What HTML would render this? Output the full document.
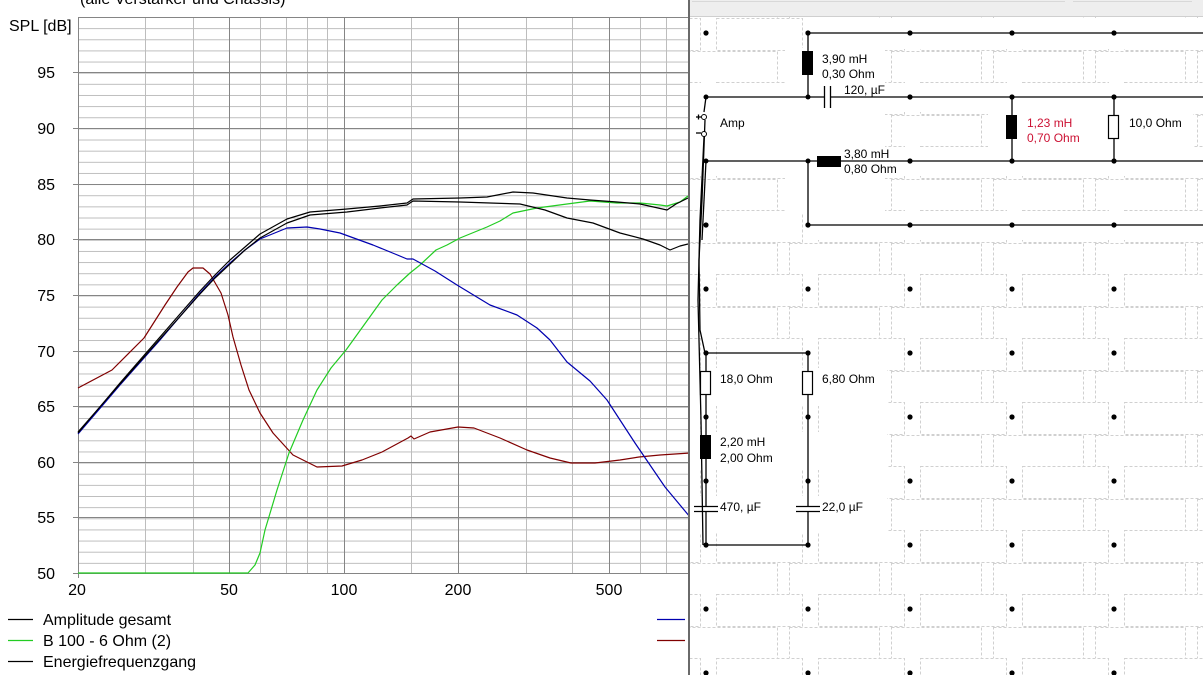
<!DOCTYPE html>
<html><head><meta charset="utf-8"><style>
html,body{margin:0;padding:0;background:#fff;width:1203px;height:675px;overflow:hidden}
svg{display:block}
text{font-family:"Liberation Sans",sans-serif}
</style></head><body>
<svg width="1203" height="675" viewBox="0 0 1203 675" xmlns="http://www.w3.org/2000/svg">
<defs>
<pattern id="hg" patternUnits="userSpaceOnUse" x="0" y="17" width="1203" height="11.14">
<line x1="0" y1="0.5" x2="1203" y2="0.5" stroke="#bdbdbd" stroke-width="1"/>
</pattern>
<pattern id="brick" patternUnits="userSpaceOnUse" x="716" y="18" width="102" height="64">
<g fill="none" stroke="#d0d0d0" stroke-width="1" stroke-dasharray="3,2">
<rect x="0.5" y="0.5" width="86" height="32"/>
<rect x="73.5" y="33.5" width="90" height="31"/>
<rect x="-28.5" y="33.5" width="90" height="31"/>
</g>
<circle cx="92" cy="15" r="2.6" fill="#000"/>
</pattern>
</defs>

<!-- Chart -->
<text x="80" y="4" font-size="16" fill="#000">(alle Verstärker und Chassis)</text>
<text x="9" y="31" font-size="16" fill="#000">SPL [dB]</text>
<rect x="78" y="17" width="612" height="556" fill="url(#hg)"/>
<g stroke="#bdbdbd" stroke-width="1">
<line x1="145.5" y1="17" x2="145.5" y2="573"/><line x1="193.5" y1="17" x2="193.5" y2="573"/>
<line x1="260.5" y1="17" x2="260.5" y2="573"/><line x1="286.5" y1="17" x2="286.5" y2="573"/>
<line x1="307.5" y1="17" x2="307.5" y2="573"/><line x1="327.5" y1="17" x2="327.5" y2="573"/>
<line x1="411.5" y1="17" x2="411.5" y2="573"/><line x1="526.5" y1="17" x2="526.5" y2="573"/>
<line x1="572.5" y1="17" x2="572.5" y2="573"/><line x1="640.5" y1="17" x2="640.5" y2="573"/>
<line x1="666.5" y1="17" x2="666.5" y2="573"/>
</g>
<g stroke="#858585" stroke-width="1">
<line x1="229.5" y1="17" x2="229.5" y2="573"/><line x1="344.5" y1="17" x2="344.5" y2="573"/>
<line x1="458.5" y1="17" x2="458.5" y2="573"/><line x1="609.5" y1="17" x2="609.5" y2="573"/>
<line x1="78" y1="17.5" x2="690" y2="17.5"/>
<line x1="73" y1="72.5" x2="690" y2="72.5"/><line x1="73" y1="128.5" x2="690" y2="128.5"/>
<line x1="73" y1="184.5" x2="690" y2="184.5"/><line x1="73" y1="239.5" x2="690" y2="239.5"/>
<line x1="73" y1="295.5" x2="690" y2="295.5"/><line x1="73" y1="351.5" x2="690" y2="351.5"/>
<line x1="73" y1="406.5" x2="690" y2="406.5"/><line x1="73" y1="462.5" x2="690" y2="462.5"/>
<line x1="73" y1="517.5" x2="690" y2="517.5"/><line x1="73" y1="573.5" x2="690" y2="573.5"/>
<line x1="78.5" y1="17" x2="78.5" y2="578"/>
</g>
<g font-size="16" fill="#000" text-anchor="end">
<text x="55" y="78">95</text><text x="55" y="134">90</text><text x="55" y="190">85</text>
<text x="55" y="245">80</text><text x="55" y="301">75</text><text x="55" y="357">70</text>
<text x="55" y="412">65</text><text x="55" y="468">60</text><text x="55" y="523">55</text>
<text x="55" y="579">50</text>
</g>
<g font-size="16" fill="#000" text-anchor="middle">
<text x="77" y="595">20</text><text x="229" y="595">50</text><text x="344" y="595">100</text>
<text x="458" y="595">200</text><text x="609" y="595">500</text>
</g>

<g fill="none" stroke-width="1.2" stroke-linejoin="round">
<polyline stroke="#800000" points="78,388 112,370 144,338 165,305 177,287 188,272 193,268 203,268 210,274 221,293 228,315 233,337 241,365 249,390 260,413 273,433 293,455 317,467 342,466 362,460 382,452 408,438 411,436 414,439 430,432 458,427 474,428 500,438 527,450 550,458 571,463 595,463 620,460 639,457 660,455 690,453"/>
<polyline stroke="#22cc22" points="78,573 248,573 255,565 260,553 265,530 277,490 289,453 303,420 317,390 331,368 346,350 364,325 382,300 397,285 410,273 420,265 436,250 447,245 460,238 487,227 500,221 513,213 537,208 567,204 590,201 617,203 640,203 660,205 667,206 680,202 688,196"/>
<polyline stroke="#0000b0" points="78,434 120,385 160,340 200,293 215,277 230,263 245,250 260,239 287,228 307,227 320,229 340,233 373,245 395,254 407,259 413,259 435,271 457,285 490,305 517,315 537,328 550,340 567,362 590,381 607,400 620,420 635,443 650,465 665,487 690,517"/>
<polyline stroke="#000" points="78,433 120,383 160,337 200,291 215,275 230,260 245,247 260,234 287,219 310,212 347,209 380,206 407,203 413,199 460,198 487,197 513,192 533,193 567,198 590,200 617,202 640,204 667,210 676,204 688,198"/>
<polyline stroke="#000" points="78,432 120,384 160,339 200,294 215,278 230,264 245,250 260,238 287,223 310,215 347,212 380,208 407,205 413,201 460,202 490,203 520,204 545,210 567,218 593,223 620,233 643,239 660,245 670,250 680,246 688,244"/>
</g>

<!-- Legend -->
<g stroke-width="1.2">
<line x1="8" y1="619.5" x2="33" y2="619.5" stroke="#000"/>
<line x1="8" y1="640.5" x2="33" y2="640.5" stroke="#22cc22"/>
<line x1="8" y1="661.5" x2="33" y2="661.5" stroke="#000"/>
<line x1="657" y1="619.5" x2="685" y2="619.5" stroke="#0000b0"/>
<line x1="657" y1="640.5" x2="685" y2="640.5" stroke="#800000"/>
</g>
<g font-size="16" fill="#000">
<text x="43" y="625">Amplitude gesamt</text>
<text x="43" y="646">B 100 - 6 Ohm (2)</text>
<text x="43" y="667">Energiefrequenzgang</text>
</g>

<!-- Right panel -->
<rect x="688" y="0" width="515" height="675" fill="#fff"/>
<rect x="690" y="17" width="513" height="658" fill="url(#brick)"/>
<g fill="#fff">
<rect x="806" y="18" width="397" height="31"/>
<rect x="690" y="83" width="513" height="29"/>
<rect x="690" y="147" width="513" height="29"/>
<rect x="806" y="211" width="397" height="29"/>
<rect x="785" y="48" width="100" height="36"/>
<rect x="690" y="110" width="195" height="40"/>
<rect x="988" y="110" width="205" height="40"/>
<rect x="785" y="176" width="100" height="37"/>
<rect x="690" y="368" width="197" height="38"/>
<rect x="690" y="432" width="197" height="38"/>
<rect x="690" y="496" width="197" height="37"/>
</g>
<g fill="#000">
<circle cx="910" cy="33" r="2.6"/><circle cx="1012" cy="33" r="2.6"/><circle cx="1114" cy="33" r="2.6"/>
<circle cx="910" cy="97" r="2.6"/><circle cx="1012" cy="97" r="2.6"/><circle cx="1114" cy="97" r="2.6"/>
<circle cx="910" cy="161" r="2.6"/><circle cx="1012" cy="161" r="2.6"/><circle cx="1114" cy="161" r="2.6"/>
<circle cx="910" cy="225" r="2.6"/><circle cx="1012" cy="225" r="2.6"/><circle cx="1114" cy="225" r="2.6"/>
<circle cx="808" cy="33" r="2.6"/><circle cx="808" cy="225" r="2.6"/>
</g>
<rect x="688" y="0" width="515" height="17" fill="#eeeeee"/>
<line x1="688" y1="16.5" x2="1203" y2="16.5" stroke="#cfcfcf"/>
<line x1="692" y1="1.5" x2="1065" y2="1.5" stroke="#d8d8d8"/>
<line x1="1073" y1="1.5" x2="1192" y2="1.5" stroke="#d8d8d8"/>
<rect x="688" y="0" width="2" height="675" fill="#6a6a6a"/>

<g stroke="#000" stroke-width="1.3" fill="none">
<line x1="808" y1="33" x2="1203" y2="33"/>
<line x1="808" y1="33" x2="808" y2="97"/>
<line x1="706" y1="97" x2="824" y2="97"/><line x1="831" y1="97" x2="1203" y2="97"/>
<line x1="824.5" y1="86" x2="824.5" y2="108"/><line x1="830.5" y1="86" x2="830.5" y2="108"/>
<line x1="706" y1="161" x2="1203" y2="161"/>
<line x1="808" y1="161" x2="808" y2="225"/>
<line x1="808" y1="225" x2="1203" y2="225"/>
<line x1="1012" y1="97" x2="1012" y2="161"/>
<line x1="1114" y1="97" x2="1114" y2="161"/>
<line x1="706" y1="97" x2="704" y2="112"/>
<polyline points="705,120 702,200 699,260 700,330 705,353"/>
<polyline points="704,137 700,220 698,300 701,420 703,545"/>
<line x1="706" y1="161" x2="702" y2="240"/>
<line x1="706" y1="353" x2="808" y2="353"/>
<line x1="706" y1="353" x2="706" y2="506"/><line x1="706" y1="512" x2="706" y2="545"/>
<line x1="808" y1="353" x2="808" y2="506"/><line x1="808" y1="512" x2="808" y2="545"/>
<line x1="706" y1="545" x2="808" y2="545"/>
<line x1="694" y1="506.5" x2="718" y2="506.5"/><line x1="694" y1="511.5" x2="718" y2="511.5"/>
<line x1="796" y1="506.5" x2="820" y2="506.5"/><line x1="796" y1="511.5" x2="820" y2="511.5"/>
<line x1="696" y1="117" x2="701" y2="117"/><line x1="698.5" y1="114.5" x2="698.5" y2="119.5"/>
<line x1="696" y1="133" x2="701" y2="133"/>
</g>
<circle cx="704" cy="117" r="2.5" fill="#fff" stroke="#000"/>
<circle cx="704" cy="134" r="2.5" fill="#fff" stroke="#000"/>
<g fill="#000">
<rect x="802" y="51" width="11" height="24"/>
<rect x="817" y="156" width="24" height="11"/>
<rect x="1006" y="115" width="11" height="24"/>
<rect x="700" y="435" width="11" height="24"/>
<circle cx="706" cy="97" r="2.5"/><circle cx="706" cy="161" r="2.5"/>
<circle cx="808" cy="97" r="2.5"/><circle cx="808" cy="161" r="2.5"/>
</g>
<g fill="#fff" stroke="#000" stroke-width="1.2">
<rect x="1108.5" y="115.5" width="10" height="23"/>
<rect x="700.5" y="371.5" width="10" height="23"/>
<rect x="802.5" y="371.5" width="10" height="23"/>
</g>
<g font-size="12" fill="#000">
<text x="822" y="63">3,90 mH</text><text x="822" y="78">0,30 Ohm</text>
<text x="844" y="94">120, µF</text>
<text x="720" y="127">Amp</text>
<text x="844" y="158">3,80 mH</text><text x="844" y="173">0,80 Ohm</text>
<text x="1129" y="127">10,0 Ohm</text>
<text x="720" y="383">18,0 Ohm</text><text x="822" y="383">6,80 Ohm</text>
<text x="720" y="446">2,20 mH</text><text x="720" y="462">2,00 Ohm</text>
<text x="720" y="511">470, µF</text><text x="822" y="511">22,0 µF</text>
</g>
<g font-size="12" fill="#cc1133">
<text x="1027" y="127">1,23 mH</text><text x="1027" y="142">0,70 Ohm</text>
</g>
</svg>
</body></html>
